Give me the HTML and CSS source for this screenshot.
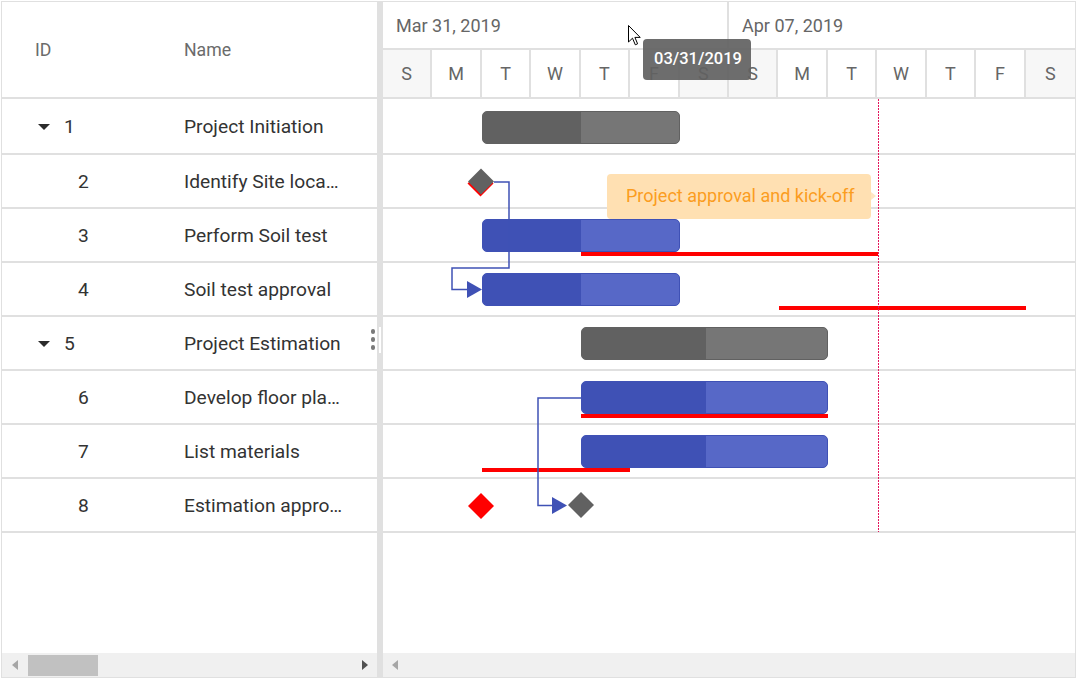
FILE: index.html
```html
<!DOCTYPE html>
<html>
<head>
<meta charset="utf-8">
<title>Gantt</title>
<link rel="stylesheet" href="styles.css">
</head>
<body>
<div class="gantt">
  <div class="grid-pane">
    <div class="grid-header">
      <div class="hcell hid">ID</div>
      <div class="hcell hname">Name</div>
    </div>
    <div class="grid-body">
      <div class="row first"><div class="cell id lvl0"><span class="expander"></span>1</div><div class="cell name">Project Initiation</div></div>
      <div class="row"><div class="cell id lvl1">2</div><div class="cell name">Identify Site location</div></div>
      <div class="row"><div class="cell id lvl1">3</div><div class="cell name">Perform Soil test</div></div>
      <div class="row"><div class="cell id lvl1">4</div><div class="cell name">Soil test approval</div></div>
      <div class="row"><div class="cell id lvl0"><span class="expander"></span>5</div><div class="cell name">Project Estimation</div><span class="kebab"><i></i><i></i><i></i></span></div>
      <div class="row"><div class="cell id lvl1">6</div><div class="cell name">Develop floor plan for estimation</div></div>
      <div class="row"><div class="cell id lvl1">7</div><div class="cell name">List materials</div></div>
      <div class="row"><div class="cell id lvl1">8</div><div class="cell name">Estimation approval</div></div>
    </div>
    <div class="hscroll">
      <span class="arr-left"></span>
      <span class="thumb"></span>
      <span class="spacer"></span>
      <span class="arr-right"></span>
    </div>
  </div>
  <div class="splitter"><span class="grip"></span></div>
  <div class="chart-pane">
    <div class="timeline">
      <div class="tier top">
        <div class="week">Mar 31, 2019</div>
        <div class="week last">Apr 07, 2019</div>
      </div>
      <div class="tier days">
        <div class="day weekend">S</div><div class="day">M</div><div class="day">T</div><div class="day">W</div><div class="day">T</div><div class="day">F</div><div class="day weekend">S</div>
        <div class="day weekend">S</div><div class="day">M</div><div class="day">T</div><div class="day">W</div><div class="day">T</div><div class="day">F</div><div class="day weekend last">S</div>
      </div>
    </div>
    <div class="chart-body">
      <div class="crow first">
        <div class="bar parent top12" style="left:99px;width:198px"><div class="prog" style="width:98px"></div></div>
      </div>
      <div class="crow"></div>
      <div class="crow">
        <div class="bar child" style="left:99px;width:198px"><div class="prog" style="width:98px"></div></div>
        <div class="baseline" style="left:198px;width:297px"></div>
      </div>
      <div class="crow">
        <div class="bar child" style="left:99px;width:198px"><div class="prog" style="width:98px"></div></div>
        <div class="baseline" style="left:396px;width:247px"></div>
      </div>
      <div class="crow">
        <div class="bar parent" style="left:198px;width:247px"><div class="prog" style="width:124px"></div></div>
      </div>
      <div class="crow">
        <div class="bar child" style="left:198px;width:247px"><div class="prog" style="width:124px"></div></div>
        <div class="baseline" style="left:198px;width:247px"></div>
      </div>
      <div class="crow">
        <div class="bar child" style="left:198px;width:247px"><div class="prog" style="width:124px"></div></div>
        <div class="baseline" style="left:99px;width:148px"></div>
      </div>
      <div class="crow"></div>

      <div class="overlay">
        <svg width="692" height="434" viewBox="0 0 692 434">
          <path d="M111 83 H126 V169 H69 V190.5 H85" stroke="#3f51b5" stroke-width="1.5" fill="none"/>
          <path d="M84 182 L99 190.5 L84 199 Z" fill="#3f51b5"/>
          <path d="M198 299 H155 V406.5 H170" stroke="#3f51b5" stroke-width="1.5" fill="none"/>
          <path d="M169 398 L184 406.5 L169 415 Z" fill="#3f51b5"/>
          <polygon points="97.5,71.5 110.5,84.5 97.5,97.5 84.5,84.5" fill="#ff0000"/>
          <polygon points="98,69.5 111,82.5 98,95.5 85,82.5" fill="#616161"/>
          <polygon points="98,394 111,407 98,420 85,407" fill="#ff0000"/>
          <polygon points="198,393 211,406 198,419 185,406" fill="#616161"/>
        </svg>
        <div class="marker"></div>
        <div class="event-label">Project approval and kick-off</div>
      </div>
    </div>
    <div class="hscroll">
      <span class="arr-left right-pane"></span>
    </div>
  </div>

  <div class="date-tip">03/31/2019</div>
  <svg class="cursor" width="14" height="22" viewBox="0 0 14 22">
    <path d="M0.5 0.5 V17 L4.5 13.2 L7.3 19.8 L9.6 18.8 L6.9 12.4 L12.2 12.4 Z" fill="#fff" stroke="#000" stroke-width="1" stroke-linejoin="round"/>
  </svg>
</div>
</body>
</html>
```

FILE: styles.css
```css
* {
  box-sizing: border-box;
}

body {
  margin: 0;
  background: #fff;
  font-family: Roboto, "Noto Sans", "Liberation Sans", sans-serif;
}

.gantt {
  position: relative;
  margin: 1px 0 0 1px;
  width: 1075px;
  height: 677px;
  border: 1px solid #e0e0e0;
  display: flex;
  overflow: hidden;
}

/* ---------- left grid ---------- */
.grid-pane {
  width: 375px;
  display: flex;
  flex-direction: column;
}

.grid-header {
  height: 97px;
  border-bottom: 2px solid #e0e0e0;
  display: flex;
  align-items: center;
  color: #6b6b6b;
  font-size: 17.7px;
  font-weight: 400;
}

.hcell.hid {
  width: 170px;
  padding-left: 33px;
}

.hcell.hname {
  padding-left: 12px;
}

.grid-body {
  flex: 1;
}

.row {
  position: relative;
  height: 54px;
  border-bottom: 2px solid #e0e0e0;
  display: flex;
  align-items: center;
  font-size: 19.2px;
  color: #333;
}

.row.first {
  height: 56px;
}

.cell.id {
  width: 170px;
  display: flex;
  align-items: center;
}

.cell.id.lvl0 {
  padding-left: 36px;
}

.cell.id.lvl1 {
  padding-left: 76px;
}

.expander {
  width: 0;
  height: 0;
  border-left: 6px solid transparent;
  border-right: 6px solid transparent;
  border-top: 6px solid #2b2b2b;
  margin-right: 14px;
  margin-top: 1px;
}

.cell.name {
  flex: 1;
  min-width: 0;
  padding: 0 34px 0 12px;
  white-space: nowrap;
  overflow: hidden;
  text-overflow: ellipsis;
}

.kebab {
  position: absolute;
  right: 2px;
  top: 12px;
  display: flex;
  flex-direction: column;
  gap: 3.5px;
}

.kebab i {
  display: block;
  width: 4.5px;
  height: 4.5px;
  border-radius: 50%;
  background: #7a7a7a;
}

/* ---------- scrollbars ---------- */
.hscroll {
  height: 24px;
  background: #f0f0f0;
  display: flex;
  align-items: center;
}

.arr-left {
  width: 0;
  height: 0;
  margin-left: 10px;
  border-top: 5.5px solid transparent;
  border-bottom: 5.5px solid transparent;
  border-right: 6px solid #a6a6a6;
}

.arr-left.right-pane {
  margin-left: 9px;
}

.thumb {
  margin-left: 10px;
  width: 70px;
  height: 21px;
  background: #c1c1c1;
}

.spacer {
  flex: 1;
}

.arr-right {
  width: 0;
  height: 0;
  margin-right: 9px;
  border-top: 5.5px solid transparent;
  border-bottom: 5.5px solid transparent;
  border-left: 6px solid #505050;
}

/* ---------- splitter ---------- */
.splitter {
  position: relative;
  width: 6px;
  background: #e0e0e0;
}

.grip {
  position: absolute;
  left: 2px;
  top: 325px;
  width: 2px;
  height: 26px;
  background: #fff;
}

/* ---------- chart ---------- */
.chart-pane {
  flex: 1;
  min-width: 0;
  display: flex;
  flex-direction: column;
}

.timeline {
  height: 97px;
  color: #666;
  font-size: 18px;
}

.tier.top {
  height: 48px;
  border-bottom: 2px solid #e0e0e0;
  display: flex;
}

.week {
  width: 346px;
  border-right: 2px solid #e0e0e0;
  padding-left: 13px;
  display: flex;
  align-items: center;
}

.week.last {
  flex: 1;
  border-right: none;
}

.tier.days {
  height: 49px;
  border-bottom: 2px solid #e0e0e0;
  display: grid;
  grid-template-columns: repeat(14, 1fr);
}

.day {
  border-right: 2px solid #e0e0e0;
  display: flex;
  align-items: center;
  justify-content: center;
}

.day.weekend {
  background: #f7f7f7;
}

.day.last {
  border-right: none;
}

.chart-body {
  position: relative;
  flex: 1;
}

.crow {
  position: relative;
  height: 54px;
  border-bottom: 2px solid #e0e0e0;
}

.crow.first {
  height: 56px;
}

.bar {
  position: absolute;
  top: 10px;
  height: 33px;
  border-radius: 5px;
  border: 1.5px solid;
  overflow: hidden;
}

.bar.top12 {
  top: 12px;
}

.bar .prog {
  height: 100%;
}

.bar.parent {
  background: #767676;
  border-color: #616161;
}

.bar.parent .prog {
  background: #616161;
}

.bar.child {
  background: #5768c7;
  border-color: #3f51b5;
}

.bar.child .prog {
  background: #3f51b5;
}

.baseline {
  position: absolute;
  top: 43px;
  height: 4px;
  background: #ff0000;
}

.overlay {
  position: absolute;
  left: 0;
  top: 0;
  width: 692px;
  height: 434px;
}

.overlay svg {
  position: absolute;
  left: 0;
  top: 0;
}

.marker {
  position: absolute;
  left: 495px;
  top: 0;
  width: 1px;
  height: 433px;
  background-image: linear-gradient(to bottom, #e3165b 0, #e3165b 2px, transparent 2px);
  background-size: 1px 3px;
}

.event-label {
  position: absolute;
  left: 224px;
  top: 75px;
  width: 264px;
  height: 45px;
  padding: 0 0 3px 19px;
  display: flex;
  align-items: center;
  background: #ffe0b2;
  color: #fb9d1f;
  font-size: 18px;
  border-radius: 4px;
}

.event-label::after {
  content: "";
  position: absolute;
  right: -5px;
  top: 18px;
  border-top: 4.5px solid transparent;
  border-bottom: 4.5px solid transparent;
  border-left: 5px solid #ffe6c4;
}

/* ---------- overlays ---------- */
.date-tip {
  position: absolute;
  left: 641px;
  top: 37px;
  width: 108px;
  height: 41px;
  padding: 0 0 2px 11px;
  display: flex;
  align-items: center;
  background: rgba(97, 97, 97, 0.92);
  color: #fff;
  font-size: 16.5px;
  font-weight: 500;
  border-radius: 4px;
}

.cursor {
  position: absolute;
  left: 626px;
  top: 23px;
}
```
